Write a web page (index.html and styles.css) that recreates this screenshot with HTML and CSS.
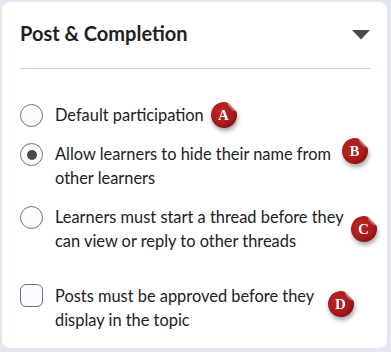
FILE: index.html
```html
<!DOCTYPE html>
<html lang="en">
<head>
    <meta charset="UTF-8">
    <title>Post &amp; Completion</title>
    <link rel="stylesheet" href="styles.css">
</head>
<body>
    <div class="card">
        <div class="card-header">
            <h2 class="card-title">Post &amp; Completion</h2>
            <svg class="caret" width="18" height="10" viewBox="0 0 18 10"><path d="M0 0 H18 L9 9.5 Z"/></svg>
        </div>

        <div class="options">
            <div class="option option-a">
                <span class="radio"></span>
                <span class="label">Default participation</span>
                <div class="badge badge-a">
                    <svg viewBox="0 0 28 28"><use href="#sticker"/><text x="13.5" y="19.2">A</text></svg>
                </div>
            </div>
            <div class="option option-b">
                <span class="radio checked"></span>
                <span class="label">Allow learners to hide their name from other learners</span>
                <div class="badge badge-b">
                    <svg viewBox="0 0 28 28"><use href="#sticker"/><text x="13.5" y="19.2">B</text></svg>
                </div>
            </div>
            <div class="option option-c">
                <span class="radio"></span>
                <span class="label">Learners must start a thread before they can view or reply to other threads</span>
                <div class="badge badge-c">
                    <svg viewBox="0 0 28 28"><use href="#sticker"/><text x="13.5" y="19.2">C</text></svg>
                </div>
            </div>
            <div class="option option-d">
                <span class="checkbox"></span>
                <span class="label">Posts must be approved before they display in the topic</span>
                <div class="badge badge-d">
                    <svg viewBox="0 0 28 28"><use href="#sticker"/><text x="13.5" y="19.2">D</text></svg>
                </div>
            </div>
        </div>
    </div>

    <!-- shared sticker shape for the letter badges -->
    <svg class="defs" width="0" height="0">
        <defs>
            <radialGradient id="red" cx="40%" cy="40%" r="65%">
                <stop offset="0" stop-color="#c42424"/>
                <stop offset="0.7" stop-color="#a81b1b"/>
                <stop offset="1" stop-color="#861111"/>
            </radialGradient>
            <linearGradient id="fold" x1="0" y1="1" x2="1" y2="0">
                <stop offset="0" stop-color="#7a0e0e"/>
                <stop offset="0.55" stop-color="#c98a8a"/>
                <stop offset="1" stop-color="#fbeaea"/>
            </linearGradient>
            <g id="sticker">
                <path d="M17.36 1.44 A13 13 0 1 0 26.56 10.64 Z" fill="url(#red)"/>
                <path d="M17.36 1.44 Q18.6 9.4 26.56 10.64 Q21.5 6.5 17.36 1.44 Z" fill="url(#fold)"/>
            </g>
        </defs>
    </svg>
</body>
</html>
```

FILE: styles.css
```css
body {
    margin: 0;
    background-color: #e3e8ef;
    font-family: Lato, "Noto Sans", sans-serif;
    color: #202122;
}

.card {
    position: relative;
    margin: 2px 4px 4px 2px;
    height: 346px;
    box-sizing: border-box;
    padding: 0 16px 0 18px;
    background-color: #fff;
    border-radius: 8px;
}

.card-header {
    display: flex;
    align-items: center;
    justify-content: space-between;
    padding: 19px 0 23px 0;
    border-bottom: 1px solid #cdd5dc;
}

.card-title {
    margin: 0;
    font-size: 20px;
    line-height: 24px;
    font-weight: 700;
}

.caret {
    fill: #494c4e;
    margin: 4px 1px 0 0;
}

.options {
    padding-top: 34px;
}

.option {
    position: relative;
    display: flex;
    align-items: flex-start;
    gap: 12px;
    padding-right: 18px;
    font-size: 16.4px;
    line-height: 24px;
}

.option-b {
    margin-top: 15px;
}

.option-c {
    margin-top: 15px;
}

.option-d {
    margin-top: 31px;
}

.radio,
.checkbox {
    flex: none;
    box-sizing: border-box;
    width: 23px;
    height: 23px;
    margin-top: 1px;
    border: 1px solid #6e7376;
    background-color: #f9fbff;
    border-radius: 50%;
    display: flex;
    align-items: center;
    justify-content: center;
}

.checkbox {
    border-radius: 6px;
    margin-top: 0;
}

.radio.checked::after {
    content: "";
    width: 10px;
    height: 10px;
    border-radius: 50%;
    background-color: #494c4e;
}

.label {
    flex: 1;
}

.badge {
    position: absolute;
    width: 28px;
    height: 28px;
}

.badge svg {
    display: block;
    width: 28px;
    height: 28px;
    overflow: visible;
    filter: drop-shadow(1px 3px 2px rgba(0, 0, 0, 0.35));
}

.badge text {
    fill: #fff;
    font-family: "Liberation Serif", "DejaVu Serif", serif;
    font-weight: 700;
    font-size: 15px;
    text-anchor: middle;
}

.badge-a { top: -2px; left: 190px; }
.badge-b { top: -5px; left: 321px; }
.badge-c { top: 10px; left: 330px; }
.badge-d { top: 6px; left: 307px; }

.defs {
    position: absolute;
}
```
